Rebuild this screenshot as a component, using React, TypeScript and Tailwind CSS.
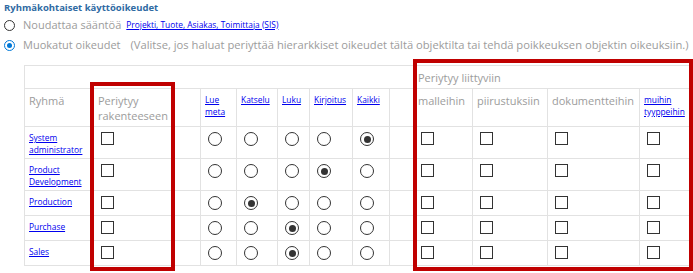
import React from "react";

const Chk = () => (
  <span className="block w-[13px] h-[13px] border border-[#333] bg-white mt-[1px] ml-[3px]" />
);

const Rad = ({ on }: { on?: boolean }) => (
  <span className="flex items-center justify-center w-[14px] h-[14px] rounded-full border border-[#333] bg-white mt-[1px] ml-[3px]">
    {on ? <span className="block w-[7px] h-[7px] rounded-full bg-[#333]" /> : null}
  </span>
);

const rows: { name: string[]; sel: number; h: string }[] = [
  { name: ["System", "administrator"], sel: 4, h: "h-[32px]" },
  { name: ["Product", "Development"], sel: 3, h: "h-[32px]" },
  { name: ["Production"], sel: 1, h: "h-[25px]" },
  { name: ["Purchase"], sel: 2, h: "h-[25px]" },
  { name: ["Sales"], sel: 2, h: "h-[25px]" },
];

const cell = "border border-[#e2e2e2] align-top pl-[4px] pt-[4px] pr-0 pb-0 leading-[0px]";
const hd = " text-[11px] leading-[15px] text-[#9c9c9c]";
const lnk = "text-[#0000ee] underline text-[8.4px] leading-[12px]";

export default function App() {
  return (
    <div className="relative w-[693px] h-[273px] bg-white overflow-hidden font-['Open_Sans',sans-serif]">
      <div className="h-[15px] pt-[2px] pl-[4px] text-[9.5px] leading-[12px] font-bold text-[#2f6aa3]">
        Ryhmäkohtaiset käyttöoikeudet
      </div>
      <div className="h-[20px] flex items-center">
        <span className="ml-[4px] w-[11px] h-[11px] rounded-full border border-[#333] bg-white" />
        <span className="ml-[8px] text-[11px] text-[#9c9c9c]">Noudattaa sääntöä</span>
        <span className="ml-[5px] text-[#0000ee] underline text-[8.4px]">
          Projekti, Tuote, Asiakas, Toimittaja (SIS)
        </span>
      </div>
      <div className="h-[21px] flex items-center">
        <span className="ml-[4px] w-[11px] h-[11px] rounded-full border border-[#0078d7] bg-white flex items-center justify-center">
          <span className="block w-[5px] h-[5px] rounded-full bg-[#0078d7]" />
        </span>
        <span className="ml-[8px] text-[11px] text-[#9c9c9c] whitespace-nowrap">
          Muokatut oikeudet
          <span className="ml-[10px] text-[11.2px]">
            (Valitse, jos haluat periyttää hierarkkiset oikeudet tältä objektilta tai tehdä poikkeuksen objektin oikeuksiin.)
          </span>
        </span>
      </div>
      <table className="mt-[9px] ml-[24px] border-collapse table-fixed w-[666px]">
        <colgroup>
          <col className="w-[69px]" />
          <col className="w-[107px]" />
          <col className="w-[36px]" />
          <col className="w-[41px]" />
          <col className="w-[32px]" />
          <col className="w-[43px]" />
          <col className="w-[37px]" />
          <col className="w-[24px]" />
          <col className="w-[59px]" />
          <col className="w-[75px]" />
          <col className="w-[92px]" />
          <col className="w-[51px]" />
        </colgroup>
        <tbody>
          <tr className="h-[23px]">
            <td colSpan={8} className="border border-[#e2e2e2] p-0" />
            <td colSpan={4} className="border border-[#e2e2e2] align-middle pl-[4px] py-0 text-[11px] leading-[15px] text-[#9c9c9c]">
              Periytyy liittyviin
            </td>
          </tr>
          <tr className="h-[38px]">
            <td className={cell + hd}>Ryhmä</td>
            <td className={cell + hd}>
              Periytyy
              <br />
              rakenteeseen
            </td>
            <td className={cell}>
              <div className={lnk + " mt-[1px]"}>
                Lue
                <br />
                meta
              </div>
            </td>
            <td className={cell}>
              <div className={lnk + " mt-[1px]"}>Katselu</div>
            </td>
            <td className={cell}>
              <div className={lnk + " mt-[1px]"}>Luku</div>
            </td>
            <td className={cell}>
              <div className={lnk + " mt-[1px]"}>Kirjoitus</div>
            </td>
            <td className={cell}>
              <div className={lnk + " mt-[1px]"}>Kaikki</div>
            </td>
            <td className={cell} />
            <td className={cell + hd}>malleihin</td>
            <td className={cell + hd}>piirustuksiin</td>
            <td className={cell + hd}>dokumentteihin</td>
            <td className={cell}>
              <div className={lnk + " mt-[1px]"}>
                muihin
                <br />
                tyyppeihin
              </div>
            </td>
          </tr>
          {rows.map((r) => (
            <tr key={r.name.join(" ")} className={r.h}>
              <td className={cell}>
                <div className={lnk + " mt-[1px]"}>
                  {r.name.map((n, i) => (
                    <div key={i}>{n}</div>
                  ))}
                </div>
              </td>
              <td className={cell}>
                <Chk />
              </td>
              {[0, 1, 2, 3, 4].map((i) => (
                <td key={i} className={cell}>
                  <Rad on={r.sel === i} />
                </td>
              ))}
              <td className={cell} />
              {[0, 1, 2, 3].map((i) => (
                <td key={i} className={cell}>
                  <Chk />
                </td>
              ))}
            </tr>
          ))}
        </tbody>
      </table>
      <div className="absolute left-[90px] top-[82px] w-[85px] h-[189px] border-[4px] border-[#c00000]" />
      <div className="absolute left-[413px] top-[59px] w-[280px] h-[212px] border-[4px] border-[#c00000]" />
    </div>
  );
}
